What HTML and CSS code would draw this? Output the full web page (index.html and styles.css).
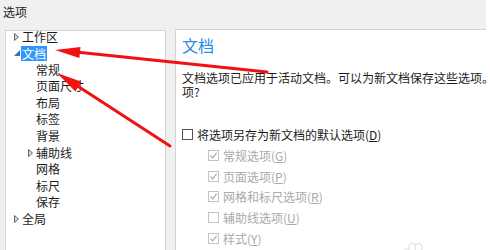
FILE: index.html
```html
<!DOCTYPE html>
<html lang="zh-CN">
<head>
  <meta charset="UTF-8" />
  <title>选项</title>
  <link rel="stylesheet" href="styles.css">
</head>
<body>
  <div class="window">
    <div class="title">选项</div>

    <div class="main">
      <div class="tree">
        <ul>
          <li class="node"><span class="tg"><svg width="5" height="8" viewBox="0 0 5 8"><polygon points="0.5,0.5 4.5,4 0.5,7.5" fill="#d8d8d8" stroke="#666" stroke-width="1"/></svg></span>工作区</li>
          <li class="node"><span class="tg"><svg width="6" height="6" viewBox="0 0 6 6"><polygon points="6,0 6,6 0,6" fill="#3a6fb0"/></svg></span><span class="sel">文档</span></li>
          <li class="node child"><span class="tg"></span>常规</li>
          <li class="node child"><span class="tg"></span>页面尺寸</li>
          <li class="node child"><span class="tg"></span>布局</li>
          <li class="node child"><span class="tg"></span>标签</li>
          <li class="node child"><span class="tg"></span>背景</li>
          <li class="node child"><span class="tg"><svg width="5" height="8" viewBox="0 0 5 8"><polygon points="0.5,0.5 4.5,4 0.5,7.5" fill="#d8d8d8" stroke="#666" stroke-width="1"/></svg></span>辅助线</li>
          <li class="node child"><span class="tg"></span>网格</li>
          <li class="node child"><span class="tg"></span>标尺</li>
          <li class="node child"><span class="tg"></span>保存</li>
          <li class="node"><span class="tg"><svg width="5" height="8" viewBox="0 0 5 8"><polygon points="0.5,0.5 4.5,4 0.5,7.5" fill="#d8d8d8" stroke="#666" stroke-width="1"/></svg></span>全局</li>
        </ul>
      </div>

      <div class="page">
        <h2>文档</h2>
        <p class="desc">文档选项已应用于活动文档。可以为新文档保存这些选项。<br>项?</p>

        <div class="check">
          <span class="box"></span>
          <span>将选项另存为新文档的默认选项(<u>D</u>)</span>
        </div>

        <div class="subs">
          <div class="check off">
            <span class="box"><svg width="9" height="9" viewBox="0 0 9 9"><path d="M1.5 4.5 L3.7 6.8 L7.6 1.8" fill="none" stroke="#a9a9a9" stroke-width="1.2"/></svg></span>
            <span>常规选项(<u>G</u>)</span>
          </div>
          <div class="check off">
            <span class="box"><svg width="9" height="9" viewBox="0 0 9 9"><path d="M1.5 4.5 L3.7 6.8 L7.6 1.8" fill="none" stroke="#a9a9a9" stroke-width="1.2"/></svg></span>
            <span>页面选项(<u>P</u>)</span>
          </div>
          <div class="check off">
            <span class="box"><svg width="9" height="9" viewBox="0 0 9 9"><path d="M1.5 4.5 L3.7 6.8 L7.6 1.8" fill="none" stroke="#a9a9a9" stroke-width="1.2"/></svg></span>
            <span>网格和标尺选项(<u>R</u>)</span>
          </div>
          <div class="check off">
            <span class="box"></span>
            <span>辅助线选项(<u>U</u>)</span>
          </div>
          <div class="check off">
            <span class="box"><svg width="9" height="9" viewBox="0 0 9 9"><path d="M1.5 4.5 L3.7 6.8 L7.6 1.8" fill="none" stroke="#a9a9a9" stroke-width="1.2"/></svg></span>
            <span>样式(<u>Y</u>)</span>
          </div>
        </div>
      </div>
    </div>

    <!-- annotation arrows drawn over the dialog -->
    <svg class="marks" width="490" height="250" viewBox="0 0 490 250">
      <g stroke="#f01212" stroke-width="3" stroke-linecap="round" fill="none">
        <line x1="267" y1="72" x2="76" y2="52"/>
        <line x1="170" y1="146" x2="76" y2="85"/>
      </g>
      <g fill="#f01212">
        <polygon points="55,50 80.5,47 79.4,58"/>
        <polygon points="57,73 81.5,81.8 75.3,91.5"/>
      </g>
      <path d="M404 249 H409 M409 250 V246.5 a3.2 3.2 0 0 1 6.4 0 V250 M415.4 246.5 a3.2 3.2 0 0 1 6.4 0 V250" fill="none" stroke="#e2e2e2" stroke-width="1.2"/>
    </svg>
  </div>
</body>
</html>
```

FILE: styles.css
```css
body {
  margin: 0;
  background: #ffffff;
  font-family: "Noto Sans CJK SC", "Microsoft YaHei", sans-serif;
  font-size: 12px;
  color: #1c1c1c;
  overflow: hidden;
}

.window {
  position: relative;
  width: 486px;
  height: 250px;
  background: #f0f0f0;
}

.title {
  padding: 4px 3px 0;
  line-height: 16px;
  height: 16px;
}

.main {
  display: flex;
  align-items: flex-start;
  gap: 9px;
  margin-top: 9px;
  padding-left: 5px;
}

/* left tree */
.tree {
  flex-shrink: 0;
  width: 159px;
  height: 240px;
  margin-top: 1px;
  background: #fff;
  border: 1px solid #d4d4d4;
}

.tree ul {
  list-style: none;
  margin: -2.5px 0 0;
  padding: 0;
}

.node {
  display: flex;
  align-items: center;
  height: 16.6px;
  line-height: 16.6px;
  padding-left: 7px;
  white-space: nowrap;
}

.node.child {
  padding-left: 21px;
}

.tg {
  width: 9px;
  height: 16px;
  display: flex;
  align-items: center;
  justify-content: flex-start;
  padding-left: 1px;
  box-sizing: border-box;
}

.tg svg {
  display: block;
}

.sel {
  background: #3297fd;
  color: #fff;
  line-height: 15px;
  padding: 0 1px;
  margin-left: -1px;
}

/* right page */
.page {
  flex: 1;
  min-width: 0;
  height: 240px;
  background: #fff;
  border: 1px solid #d4d4d4;
  border-right: none;
  padding: 5px 0 0 6px;
}

.page h2 {
  margin: 0;
  font-size: 16px;
  line-height: 20px;
  font-weight: normal;
  color: #2a8be4;
}

.desc {
  margin: 15.5px 0 0;
  line-height: 14px;
  white-space: nowrap;
}

.check {
  display: flex;
  align-items: center;
  gap: 4px;
  height: 20.8px;
  white-space: nowrap;
}

.page > .check {
  margin-top: 25.6px;
}

.box {
  width: 11px;
  height: 11px;
  border: 1px solid #555;
  background: #fff;
  box-sizing: border-box;
  display: flex;
  align-items: center;
  justify-content: center;
}

.box svg {
  display: block;
}

.subs {
  padding-left: 26px;
}

.check.off {
  color: #a9a9a9;
}

.check.off .box {
  border-color: #c4c4c4;
}

.marks {
  position: absolute;
  top: 0;
  left: 0;
  pointer-events: none;
}
```
